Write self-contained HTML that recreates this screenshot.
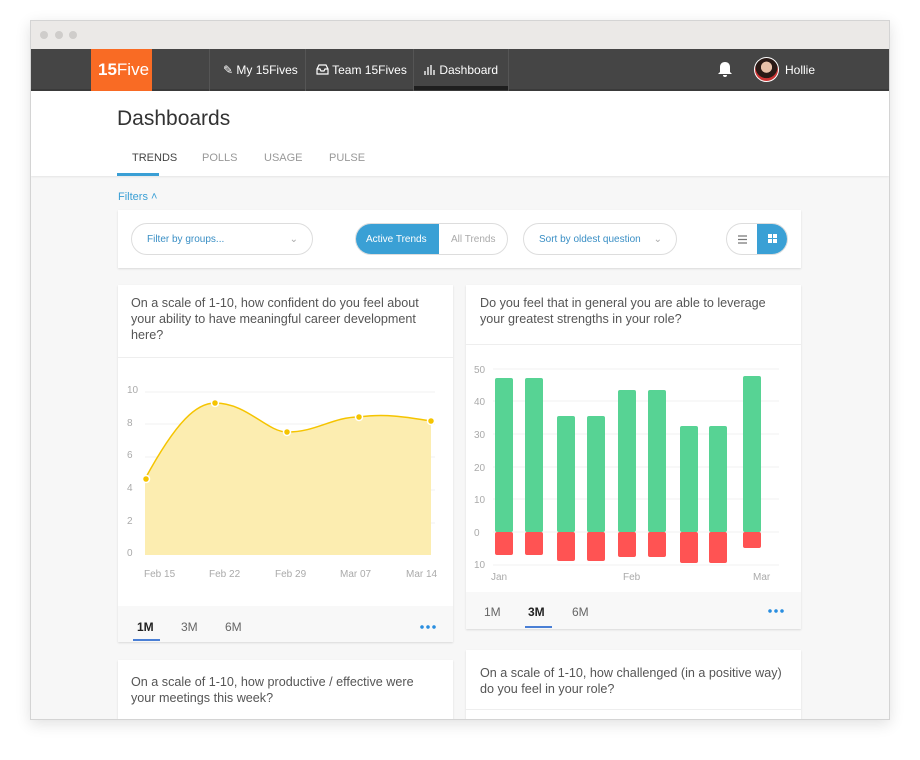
<!DOCTYPE html>
<html><head><meta charset="utf-8"><style>
*{margin:0;padding:0;box-sizing:border-box}
body{width:920px;height:760px;background:#fff;font-family:"Liberation Sans",sans-serif;position:relative;overflow:hidden}
.a{position:absolute}
.frame{left:30px;top:20px;width:860px;height:700px;border:1px solid #d4d4d4;box-shadow:0 4px 14px rgba(0,0,0,.12);background:#f7f7f7;overflow:hidden}
.tb{left:0;top:0;width:858px;height:28px;background:#ebe9e7}
.dot{width:8px;height:8px;border-radius:50%;background:#cfcdcb;top:10px}
.nav{left:0;top:28px;width:858px;height:42px;background:#454545;border-bottom:2px solid #3a3a3a}
.nt{color:#fff;font-size:12px;top:14px}
.sep{top:0;width:1px;height:42px;background:#555}
.card{background:#fff;box-shadow:0 1px 2px rgba(0,0,0,.12)}
.q{font-size:12.6px;color:#555;line-height:16px}
.dots{width:18px;height:4px;background:radial-gradient(circle,#2a8ee0 1.6px,transparent 2px) 0 0/6px 4px repeat-x}
</style></head><body>
<div class="a frame">
 <div class="a tb"></div>
 <div class="a dot" style="left:9px"></div><div class="a dot" style="left:24px"></div><div class="a dot" style="left:38px"></div>
 <div class="a nav">
  <div class="a" style="left:60px;top:0;width:61px;height:42px;background:#f96b24;color:#fff;font-size:17px;padding:11px 0 0 7px"><b>15</b>Five</div>
  <div class="a sep" style="left:178px"></div><div class="a sep" style="left:274px"></div><div class="a sep" style="left:382px"></div><div class="a sep" style="left:477px"></div>
  <div class="a" style="left:383px;top:37px;width:94px;height:4px;background:#1e1e1e"></div>
  <div class="a nt" style="left:192px">✎ My 15Fives</div>
  <div class="a nt" style="left:285px"><svg width="13" height="11" style="vertical-align:-1px"><path d="M1 5l2-4h7l2 4v5H1zM1 5h3l1 2h3l1-2h3" fill="none" stroke="#fff" stroke-width="1.2"/></svg> Team 15Fives</div>
  <div class="a nt" style="left:393px"><svg width="12" height="11" style="vertical-align:-1px"><path d="M1 11V7M4 11V3M7 11V1M10 11V6" stroke="#fff" stroke-width="1.3"/></svg> Dashboard</div>
  <svg class="a" style="left:686px;top:12px" width="16" height="17"><path d="M8 1c-3 0-5 2-5 5v5l-2 2h14l-2-2V6c0-3-2-5-5-5zM6 14a2 2 0 0 0 4 0z" fill="#fff"/></svg>
  <div class="a" style="left:723px;top:8px;width:25px;height:25px;border-radius:50%;background:radial-gradient(circle at 50% 40%,#e8c0a8 30%,#2a1a16 32%,#2a1a16 60%,#c33 62%);border:1px solid #fff"></div>
  <div class="a nt" style="left:754px">Hollie</div>
 </div>
 <div class="a" style="left:0;top:70px;width:858px;height:85px;background:#fff;box-shadow:0 1px 2px rgba(0,0,0,.08)">
  <div class="a" style="left:86px;top:16px;font-size:21px;color:#333">Dashboards</div>
  <div class="a" style="left:101px;top:61px;font-size:11px;color:#444">TRENDS</div>
  <div class="a" style="left:171px;top:61px;font-size:11px;color:#999">POLLS</div>
  <div class="a" style="left:233px;top:61px;font-size:11px;color:#999">USAGE</div>
  <div class="a" style="left:298px;top:61px;font-size:11px;color:#999">PULSE</div>
  <div class="a" style="left:86px;top:82px;width:42px;height:3px;background:#3a9fd5"></div>
 </div>
 <div class="a" style="left:87px;top:170px;font-size:11px;color:#3a9fd5">Filters ˄</div>
 <div class="a card" style="left:87px;top:189px;width:683px;height:58px">
  <div class="a" style="left:13px;top:13px;width:182px;height:32px;border:1px solid #ddd;border-radius:16px;font-size:10px;color:#3a8fc5;padding:10px 15px">Filter by groups...<span style="position:absolute;right:14px;color:#aaa">⌄</span></div>
  <div class="a" style="left:237px;top:13px;width:153px;height:32px;border:1px solid #ddd;border-radius:16px;overflow:hidden;font-size:10px">
   <div class="a" style="left:0;top:0;width:83px;height:30px;background:#3aa0d5;color:#fff;padding:10px 0 0 10px">Active Trends</div>
   <div class="a" style="left:95px;top:10px;color:#aaa">All Trends</div></div>
  <div class="a" style="left:405px;top:13px;width:154px;height:32px;border:1px solid #ddd;border-radius:16px;font-size:10px;color:#3a8fc5;padding:10px 15px">Sort by oldest question<span style="position:absolute;right:14px;color:#aaa">⌄</span></div>
  <div class="a" style="left:608px;top:13px;width:62px;height:32px;border:1px solid #ddd;border-radius:16px;overflow:hidden">
   <svg class="a" style="left:11px;top:11px" width="10" height="9"><path d="M0 1h9M0 4.5h9M0 8h9" stroke="#777" stroke-width="1.2"/></svg>
   <div class="a" style="left:30px;top:0;width:32px;height:30px;background:#3aa0d5"><svg class="a" style="left:11px;top:10px" width="10" height="10"><path d="M0 0h4v4H0zM5 0h4v4H5zM0 5h4v4H0zM5 5h4v4H5z" fill="#fff"/></svg></div></div>
 </div>
 <!-- left card -->
 <div class="a card" style="left:87px;top:264px;width:335px;height:357px">
  <div class="a q" style="left:13px;top:10px;width:310px">On a scale of 1-10, how confident do you feel about your ability to have meaningful career development here?</div>
  <div class="a" style="left:0;top:72px;width:335px;height:1px;background:#eee"></div>
  <div class="a" style="left:0;top:321px;width:335px;height:36px;background:#f8f8f8"></div>
  <div class="a" style="left:19px;top:335px;font-size:12px;color:#222;font-weight:bold">1M</div>
  <div class="a" style="left:63px;top:335px;font-size:12px;color:#666">3M</div>
  <div class="a" style="left:107px;top:335px;font-size:12px;color:#666">6M</div>
  <div class="a" style="left:15px;top:354px;width:27px;height:2px;background:#4a7fd5"></div>
  <div class="a dots" style="left:301px;top:340px"></div>
 </div>
 <svg class="a" style="left:86px;top:339px" width="335" height="230">
  <g stroke="#f0f0f0"><path d="M28 32H318M28 64H318M28 97H318M28 130H318M28 163H318"/></g>
  <path d="M28 119C60 60 80 43 98 43C130 43 150 72 170 72C200 72 215 57 242 57C270 53 295 58 314 61V195H28Z" fill="#fcedb0"/>
  <path d="M28 119C60 60 80 43 98 43C130 43 150 72 170 72C200 72 215 57 242 57C270 53 295 58 314 61" fill="none" stroke="#f5c400" stroke-width="1.5"/>
  <g fill="#f5c400" stroke="#fff" stroke-width="1.5"><circle cx="29" cy="119" r="3.5"/><circle cx="98" cy="43" r="3.5"/><circle cx="170" cy="72" r="3.5"/><circle cx="242" cy="57" r="3.5"/><circle cx="314" cy="61" r="3.5"/></g>
  <g font-size="10" fill="#aaa" font-family="Liberation Sans"><text x="10" y="33">10</text><text x="10" y="66">8</text><text x="10" y="98">6</text><text x="10" y="131">4</text><text x="10" y="164">2</text><text x="10" y="196">0</text>
  <text x="27" y="217">Feb 15</text><text x="92" y="217">Feb 22</text><text x="158" y="217">Feb 29</text><text x="223" y="217">Mar 07</text><text x="289" y="217">Mar 14</text></g>
 </svg>
 <!-- right card -->
 <div class="a card" style="left:435px;top:264px;width:335px;height:344px">
  <div class="a q" style="left:14px;top:10px;width:310px">Do you feel that in general you are able to leverage your greatest strengths in your role?</div>
  <div class="a" style="left:0;top:59px;width:335px;height:1px;background:#eee"></div>
  <div class="a" style="left:0;top:307px;width:335px;height:37px;background:#f8f8f8"></div>
  <div class="a" style="left:18px;top:320px;font-size:12px;color:#666">1M</div>
  <div class="a" style="left:62px;top:320px;font-size:12px;color:#222;font-weight:bold">3M</div>
  <div class="a" style="left:106px;top:320px;font-size:12px;color:#666">6M</div>
  <div class="a" style="left:59px;top:341px;width:27px;height:2px;background:#4a7fd5"></div>
  <div class="a dots" style="left:301px;top:324px"></div>
 </div>
 <svg class="a" style="left:434px;top:309px" width="335" height="260">
  <g stroke="#f2f2f2"><path d="M28 39H314M28 71H314M28 104H314M28 137H314M28 169H314M28 202H314M28 235H314"/></g>
  <g fill="#57d394"><rect x="30" y="48" width="18" height="154" rx="2"/><rect x="60" y="48" width="18" height="154" rx="2"/><rect x="92" y="86" width="18" height="116" rx="2"/><rect x="122" y="86" width="18" height="116" rx="2"/><rect x="153" y="60" width="18" height="142" rx="2"/><rect x="183" y="60" width="18" height="142" rx="2"/><rect x="215" y="96" width="18" height="106" rx="2"/><rect x="244" y="96" width="18" height="106" rx="2"/><rect x="278" y="46" width="18" height="156" rx="2"/></g>
  <g fill="#ff5353"><rect x="30" y="202" width="18" height="23" rx="2"/><rect x="60" y="202" width="18" height="23" rx="2"/><rect x="92" y="202" width="18" height="29" rx="2"/><rect x="122" y="202" width="18" height="29" rx="2"/><rect x="153" y="202" width="18" height="25" rx="2"/><rect x="183" y="202" width="18" height="25" rx="2"/><rect x="215" y="202" width="18" height="31" rx="2"/><rect x="244" y="202" width="18" height="31" rx="2"/><rect x="278" y="202" width="18" height="16" rx="2"/></g>
  <g font-size="10" fill="#aaa" font-family="Liberation Sans"><text x="9" y="43">50</text><text x="9" y="75">40</text><text x="9" y="108">30</text><text x="9" y="141">20</text><text x="9" y="173">10</text><text x="9" y="206">0</text><text x="9" y="238">10</text>
  <text x="26" y="250">Jan</text><text x="158" y="250">Feb</text><text x="288" y="250">Mar</text></g>
 </svg>
 <!-- lower cards -->
 <div class="a card" style="left:87px;top:639px;width:335px;height:80px">
  <div class="a q" style="left:13px;top:14px;width:310px">On a scale of 1-10, how productive / effective were your meetings this week?</div></div>
 <div class="a card" style="left:435px;top:629px;width:335px;height:90px">
  <div class="a q" style="left:14px;top:15px;width:315px">On a scale of 1-10, how challenged (in a positive way) do you feel in your role?</div>
  <div class="a" style="left:0;top:59px;width:335px;height:1px;background:#eee"></div></div>
</div>
</body></html>
